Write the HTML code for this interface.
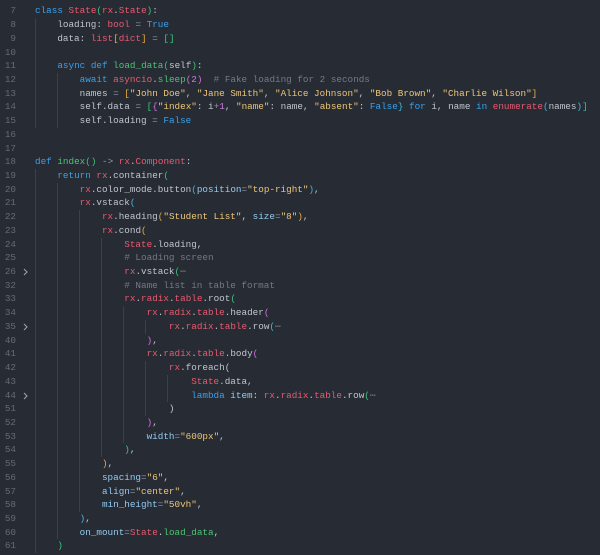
<!DOCTYPE html>
<html><head><meta charset="utf-8"><style>
html,body{margin:0;padding:0;background:#272b33;width:600px;height:555px;overflow:hidden}
#c{position:absolute;left:0;top:4.4px;width:600px}
.l{position:relative;height:13.72px;line-height:13.72px;font-family:"Liberation Mono",monospace;font-size:9.3px;color:#c0c6d0;white-space:pre}
.n{position:absolute;right:584px;top:0;color:#646b78;text-align:right}
.t{position:absolute;left:35px;top:0}
.g{position:absolute;top:0;width:1px;height:13.72px;background:#3b404a}
.f{position:absolute;left:23px;top:3px}
.k{color:#3aa0ec}.r{color:#e85a70}.fn{color:#4cc474}.s{color:#ecc679}.p{color:#94cbf2}.c{color:#737a87}.nu{color:#cc7ee0}.o{color:#8f98a8}
.bg{color:#3cc47c}.bo{color:#eeaa3d}.bm{color:#d86ae6}.bc{color:#3fb8dc}.bw{color:#c0c6d0}.e{color:#7a808c}
</style></head><body><div id="c">
<div class="l"><span class="n">7</span><span class="t"><span class="k">class</span> <span class="r">State</span><span class="bg">(</span><span class="r">rx</span>.<span class="r">State</span><span class="bg">)</span>:</span></div>
<div class="l"><i class="g" style="left:35px"></i><span class="n">8</span><span class="t">    loading: <span class="r">bool</span> <span class="o">=</span> <span class="k">True</span></span></div>
<div class="l"><i class="g" style="left:35px"></i><span class="n">9</span><span class="t">    data: <span class="r">list</span><span class="bo">[</span><span class="r">dict</span><span class="bo">]</span> <span class="o">=</span> <span class="bg">[]</span></span></div>
<div class="l"><i class="g" style="left:35px"></i><span class="n">10</span><span class="t"></span></div>
<div class="l"><i class="g" style="left:35px"></i><span class="n">11</span><span class="t">    <span class="k">async</span> <span class="k">def</span> <span class="fn">load_data</span><span class="bg">(</span>self<span class="bg">)</span>:</span></div>
<div class="l"><i class="g" style="left:35px"></i><i class="g" style="left:57px"></i><span class="n">12</span><span class="t">        <span class="k">await</span> <span class="r">asyncio</span>.<span class="fn">sleep</span><span class="bm">(</span><span class="nu">2</span><span class="bm">)</span>  <span class="c"># Fake loading for 2 seconds</span></span></div>
<div class="l"><i class="g" style="left:35px"></i><i class="g" style="left:57px"></i><span class="n">13</span><span class="t">        names <span class="o">=</span> <span class="bo">[</span><span class="s">"John Doe"</span>, <span class="s">"Jane Smith"</span>, <span class="s">"Alice Johnson"</span>, <span class="s">"Bob Brown"</span>, <span class="s">"Charlie Wilson"</span><span class="bo">]</span></span></div>
<div class="l"><i class="g" style="left:35px"></i><i class="g" style="left:57px"></i><span class="n">14</span><span class="t">        self.data <span class="o">=</span> <span class="bg">[</span><span class="bm">{</span><span class="s">"index"</span>: i<span class="o">+</span><span class="nu">1</span>, <span class="s">"name"</span>: name, <span class="s">"absent"</span>: <span class="k">False</span><span class="bc">}</span> <span class="k">for</span> i, name <span class="k">in</span> <span class="r">enumerate</span><span class="bc">(</span>names<span class="bc">)</span><span class="bg">]</span></span></div>
<div class="l"><i class="g" style="left:35px"></i><i class="g" style="left:57px"></i><span class="n">15</span><span class="t">        self.loading <span class="o">=</span> <span class="k">False</span></span></div>
<div class="l"><span class="n">16</span></div>
<div class="l"><span class="n">17</span></div>
<div class="l"><span class="n">18</span><span class="t"><span class="k">def</span> <span class="fn">index</span><span class="bg">()</span> <span class="o">-&gt;</span> <span class="r">rx</span>.<span class="r">Component</span>:</span></div>
<div class="l"><i class="g" style="left:35px"></i><span class="n">19</span><span class="t">    <span class="k">return</span> <span class="r">rx</span>.container<span class="bg">(</span></span></div>
<div class="l"><i class="g" style="left:35px"></i><i class="g" style="left:57px"></i><span class="n">20</span><span class="t">        <span class="r">rx</span>.color_mode.button<span class="bc">(</span><span class="p">position</span><span class="o">=</span><span class="s">"top-right"</span><span class="bc">)</span>,</span></div>
<div class="l"><i class="g" style="left:35px"></i><i class="g" style="left:57px"></i><span class="n">21</span><span class="t">        <span class="r">rx</span>.vstack<span class="bc">(</span></span></div>
<div class="l"><i class="g" style="left:35px"></i><i class="g" style="left:57px"></i><i class="g" style="left:79px"></i><span class="n">22</span><span class="t">            <span class="r">rx</span>.heading<span class="bo">(</span><span class="s">"Student List"</span>, <span class="p">size</span><span class="o">=</span><span class="s">"8"</span><span class="bo">)</span>,</span></div>
<div class="l"><i class="g" style="left:35px"></i><i class="g" style="left:57px"></i><i class="g" style="left:79px"></i><span class="n">23</span><span class="t">            <span class="r">rx</span>.cond<span class="bo">(</span></span></div>
<div class="l"><i class="g" style="left:35px"></i><i class="g" style="left:57px"></i><i class="g" style="left:79px"></i><i class="g" style="left:101px"></i><span class="n">24</span><span class="t">                <span class="r">State</span>.loading,</span></div>
<div class="l"><i class="g" style="left:35px"></i><i class="g" style="left:57px"></i><i class="g" style="left:79px"></i><i class="g" style="left:101px"></i><span class="n">25</span><span class="t">                <span class="c"># Loading screen</span></span></div>
<div class="l"><i class="g" style="left:35px"></i><i class="g" style="left:57px"></i><i class="g" style="left:79px"></i><i class="g" style="left:101px"></i><span class="n">26</span><svg class="f" width="5" height="8"><path d="M1 1 L4 4 L1 7" stroke="#9aa0aa" stroke-width="1.1" fill="none"/></svg><span class="t">                <span class="r">rx</span>.vstack<span class="bg">(</span><span class="e">⋯</span></span></div>
<div class="l"><i class="g" style="left:35px"></i><i class="g" style="left:57px"></i><i class="g" style="left:79px"></i><i class="g" style="left:101px"></i><span class="n">32</span><span class="t">                <span class="c"># Name list in table format</span></span></div>
<div class="l"><i class="g" style="left:35px"></i><i class="g" style="left:57px"></i><i class="g" style="left:79px"></i><i class="g" style="left:101px"></i><span class="n">33</span><span class="t">                <span class="r">rx</span>.<span class="r">radix</span>.<span class="r">table</span>.root<span class="bg">(</span></span></div>
<div class="l"><i class="g" style="left:35px"></i><i class="g" style="left:57px"></i><i class="g" style="left:79px"></i><i class="g" style="left:101px"></i><i class="g" style="left:123px"></i><span class="n">34</span><span class="t">                    <span class="r">rx</span>.<span class="r">radix</span>.<span class="r">table</span>.header<span class="bm">(</span></span></div>
<div class="l"><i class="g" style="left:35px"></i><i class="g" style="left:57px"></i><i class="g" style="left:79px"></i><i class="g" style="left:101px"></i><i class="g" style="left:123px"></i><i class="g" style="left:145px"></i><span class="n">35</span><svg class="f" width="5" height="8"><path d="M1 1 L4 4 L1 7" stroke="#9aa0aa" stroke-width="1.1" fill="none"/></svg><span class="t">                        <span class="r">rx</span>.<span class="r">radix</span>.<span class="r">table</span>.row<span class="bc">(</span><span class="e">⋯</span></span></div>
<div class="l"><i class="g" style="left:35px"></i><i class="g" style="left:57px"></i><i class="g" style="left:79px"></i><i class="g" style="left:101px"></i><i class="g" style="left:123px"></i><span class="n">40</span><span class="t">                    <span class="bm">)</span>,</span></div>
<div class="l"><i class="g" style="left:35px"></i><i class="g" style="left:57px"></i><i class="g" style="left:79px"></i><i class="g" style="left:101px"></i><i class="g" style="left:123px"></i><span class="n">41</span><span class="t">                    <span class="r">rx</span>.<span class="r">radix</span>.<span class="r">table</span>.body<span class="bm">(</span></span></div>
<div class="l"><i class="g" style="left:35px"></i><i class="g" style="left:57px"></i><i class="g" style="left:79px"></i><i class="g" style="left:101px"></i><i class="g" style="left:123px"></i><i class="g" style="left:145px"></i><span class="n">42</span><span class="t">                        <span class="r">rx</span>.foreach<span class="bw">(</span></span></div>
<div class="l"><i class="g" style="left:35px"></i><i class="g" style="left:57px"></i><i class="g" style="left:79px"></i><i class="g" style="left:101px"></i><i class="g" style="left:123px"></i><i class="g" style="left:145px"></i><i class="g" style="left:167px"></i><span class="n">43</span><span class="t">                            <span class="r">State</span>.data,</span></div>
<div class="l"><i class="g" style="left:35px"></i><i class="g" style="left:57px"></i><i class="g" style="left:79px"></i><i class="g" style="left:101px"></i><i class="g" style="left:123px"></i><i class="g" style="left:145px"></i><i class="g" style="left:167px"></i><span class="n">44</span><svg class="f" width="5" height="8"><path d="M1 1 L4 4 L1 7" stroke="#9aa0aa" stroke-width="1.1" fill="none"/></svg><span class="t">                            <span class="k">lambda</span> <span class="p">item</span>: <span class="r">rx</span>.<span class="r">radix</span>.<span class="r">table</span>.row<span class="bg">(</span><span class="e">⋯</span></span></div>
<div class="l"><i class="g" style="left:35px"></i><i class="g" style="left:57px"></i><i class="g" style="left:79px"></i><i class="g" style="left:101px"></i><i class="g" style="left:123px"></i><i class="g" style="left:145px"></i><span class="n">51</span><span class="t">                        <span class="bw">)</span></span></div>
<div class="l"><i class="g" style="left:35px"></i><i class="g" style="left:57px"></i><i class="g" style="left:79px"></i><i class="g" style="left:101px"></i><i class="g" style="left:123px"></i><span class="n">52</span><span class="t">                    <span class="bm">)</span>,</span></div>
<div class="l"><i class="g" style="left:35px"></i><i class="g" style="left:57px"></i><i class="g" style="left:79px"></i><i class="g" style="left:101px"></i><i class="g" style="left:123px"></i><span class="n">53</span><span class="t">                    <span class="p">width</span><span class="o">=</span><span class="s">"600px"</span>,</span></div>
<div class="l"><i class="g" style="left:35px"></i><i class="g" style="left:57px"></i><i class="g" style="left:79px"></i><i class="g" style="left:101px"></i><span class="n">54</span><span class="t">                <span class="bg">)</span>,</span></div>
<div class="l"><i class="g" style="left:35px"></i><i class="g" style="left:57px"></i><i class="g" style="left:79px"></i><span class="n">55</span><span class="t">            <span class="bo">)</span>,</span></div>
<div class="l"><i class="g" style="left:35px"></i><i class="g" style="left:57px"></i><i class="g" style="left:79px"></i><span class="n">56</span><span class="t">            <span class="p">spacing</span><span class="o">=</span><span class="s">"6"</span>,</span></div>
<div class="l"><i class="g" style="left:35px"></i><i class="g" style="left:57px"></i><i class="g" style="left:79px"></i><span class="n">57</span><span class="t">            <span class="p">align</span><span class="o">=</span><span class="s">"center"</span>,</span></div>
<div class="l"><i class="g" style="left:35px"></i><i class="g" style="left:57px"></i><i class="g" style="left:79px"></i><span class="n">58</span><span class="t">            <span class="p">min_height</span><span class="o">=</span><span class="s">"50vh"</span>,</span></div>
<div class="l"><i class="g" style="left:35px"></i><i class="g" style="left:57px"></i><span class="n">59</span><span class="t">        <span class="bc">)</span>,</span></div>
<div class="l"><i class="g" style="left:35px"></i><i class="g" style="left:57px"></i><span class="n">60</span><span class="t">        <span class="p">on_mount</span><span class="o">=</span><span class="r">State</span>.<span class="fn">load_data</span>,</span></div>
<div class="l"><i class="g" style="left:35px"></i><span class="n">61</span><span class="t">    <span class="bg">)</span></span></div>
</div></body></html>
